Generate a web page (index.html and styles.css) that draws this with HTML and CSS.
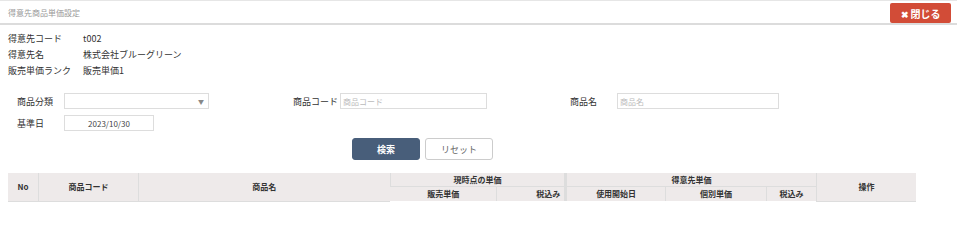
FILE: index.html
```html
<!DOCTYPE html>
<html lang="ja">
<head>
    <meta charset="UTF-8">
    <title>得意先商品単価設定</title>
    <link rel="stylesheet" href="styles.css">
</head>
<body>
    <div class="header">
        <span class="title">得意先商品単価設定</span>
        <button class="close-btn"><span class="x">&#x2716;</span>閉じる</button>
    </div>

    <table class="info">
        <tr><td class="info-label">得意先コード</td><td>t002</td></tr>
        <tr><td class="info-label">得意先名</td><td>株式会社ブルーグリーン</td></tr>
        <tr><td class="info-label">販売単価ランク</td><td>販売単価1</td></tr>
    </table>

    <div class="search">
        <div class="search-row">
            <div class="field f1">
                <label>商品分類</label>
                <div class="select"><span class="arrow">&#9660;</span></div>
            </div>
            <div class="field f2">
                <label>商品コード</label>
                <input class="text code" placeholder="商品コード">
            </div>
            <div class="field f3">
                <label>商品名</label>
                <input class="text name" placeholder="商品名">
            </div>
        </div>
        <div class="search-row">
            <div class="field f1">
                <label>基準日</label>
                <input class="text date" value="2023/10/30">
            </div>
        </div>
        <div class="buttons">
            <button class="btn-search">検索</button>
            <button class="btn-reset">リセット</button>
        </div>
    </div>

    <table class="list">
        <thead>
            <tr class="head-top">
                <th rowspan="2" class="c-no">No</th>
                <th rowspan="2" class="c-code">商品コード</th>
                <th rowspan="2" class="c-name">商品名</th>
                <th colspan="2" class="sep">現時点の単価</th>
                <th colspan="3">得意先単価</th>
                <th rowspan="2" class="c-op">操作</th>
            </tr>
            <tr>
                <th class="c-price">販売単価</th>
                <th class="c-tax sep">税込み</th>
                <th class="c-start">使用開始日</th>
                <th class="c-own">個別単価</th>
                <th class="c-tax2">税込み</th>
            </tr>
        </thead>
        <tbody></tbody>
    </table>
</body>
</html>
```

FILE: styles.css
```css
body {
    font-family: "Noto Sans CJK JP", "Liberation Sans", sans-serif;
    font-size: 9px;
    color: #333;
    margin: 0;
    background-color: white;
}
.header {
    display: flex;
    justify-content: space-between;
    align-items: center;
    height: 22px;
    border-top: 1px solid #e6e6e6;
    border-bottom: 2px solid #dcdcdc;
    padding: 0 6px 0 8px;
}
.title {
    color: #999;
    font-size: 8px;
}
.close-btn {
    background-color: #d24c37;
    color: white;
    border: none;
    border-radius: 2px;
    font-family: inherit;
    font-size: 10px;
    font-weight: bold;
    width: 61px;
    height: 20px;
    margin-top: 2px;
    padding: 0;
}
.close-btn .x {
    font-size: 9px;
    margin-right: 2px;
}
.info {
    border-collapse: collapse;
    margin: 5px 0 0 8px;
}
.info td {
    padding: 0;
    height: 16px;
    font-size: 9px;
}
.info-label {
    width: 75px;
}
.search {
    margin-top: 12px;
}
.search-row {
    display: flex;
    align-items: center;
    height: 22px;
}
.field {
    display: flex;
    align-items: center;
}
.field label {
    font-size: 9px;
    white-space: nowrap;
}
.f1 {
    padding-left: 17px;
    width: 276px;
}
.f1 label {
    width: 47px;
}
.f2 {
    width: 277px;
}
.f2 label {
    width: 47px;
}
.f3 label {
    width: 47px;
}
.select {
    width: 143px;
    height: 14px;
    border: 1px solid #ddd;
    position: relative;
}
.arrow {
    position: absolute;
    right: 4px;
    top: 3px;
    font-size: 6px;
    color: #888;
}
.text {
    box-sizing: border-box;
    height: 16px;
    border: 1px solid #ddd;
    padding: 0 2px;
    font-family: inherit;
    font-size: 8px;
    color: #444;
    outline: none;
}
.text::placeholder {
    color: #bbb;
}
.code {
    width: 147px;
}
.name {
    width: 162px;
}
.date {
    width: 90px;
    text-align: center;
}
.buttons {
    display: flex;
    justify-content: center;
    gap: 5px;
    margin: 4px 112px 0 0;
}
.buttons button {
    width: 68px;
    height: 22px;
    border-radius: 3px;
    font-family: inherit;
    font-size: 9px;
    padding: 0;
}
.btn-search {
    background-color: #485e7a;
    border: 1px solid #485e7a;
    color: white;
    font-weight: bold;
}
.btn-reset {
    background-color: white;
    border: 1px solid #ccc;
    color: #666;
}
.list {
    border-collapse: collapse;
    margin: 13px 0 0 8px;
    width: 908px;
}
.list th {
    background-color: #eeeaea;
    font-size: 8px;
    font-weight: bold;
    line-height: 12px;
    color: #333;
    height: 14px;
    padding: 0;
    border-left: 1px solid #ddd;
    border-bottom: 1px solid #ddd;
}
.list .head-top th {
    height: 13px;
}
.list th:first-child {
    border-left: none;
}
.list thead tr:last-child th {
    border-bottom: none;
}
.list .sep {
    border-right: 3px solid #ddd;
}
.c-no { width: 30px; }
.c-code { width: 99px; }
.c-name { width: 251px; }
.c-price { width: 106px; }
.c-tax { width: 63px; text-align: right; padding-right: 4px !important; }
.c-start { width: 98px; }
.c-own { width: 100px; }
.c-tax2 { width: 49px; }
.c-op { width: 99px; }
```
